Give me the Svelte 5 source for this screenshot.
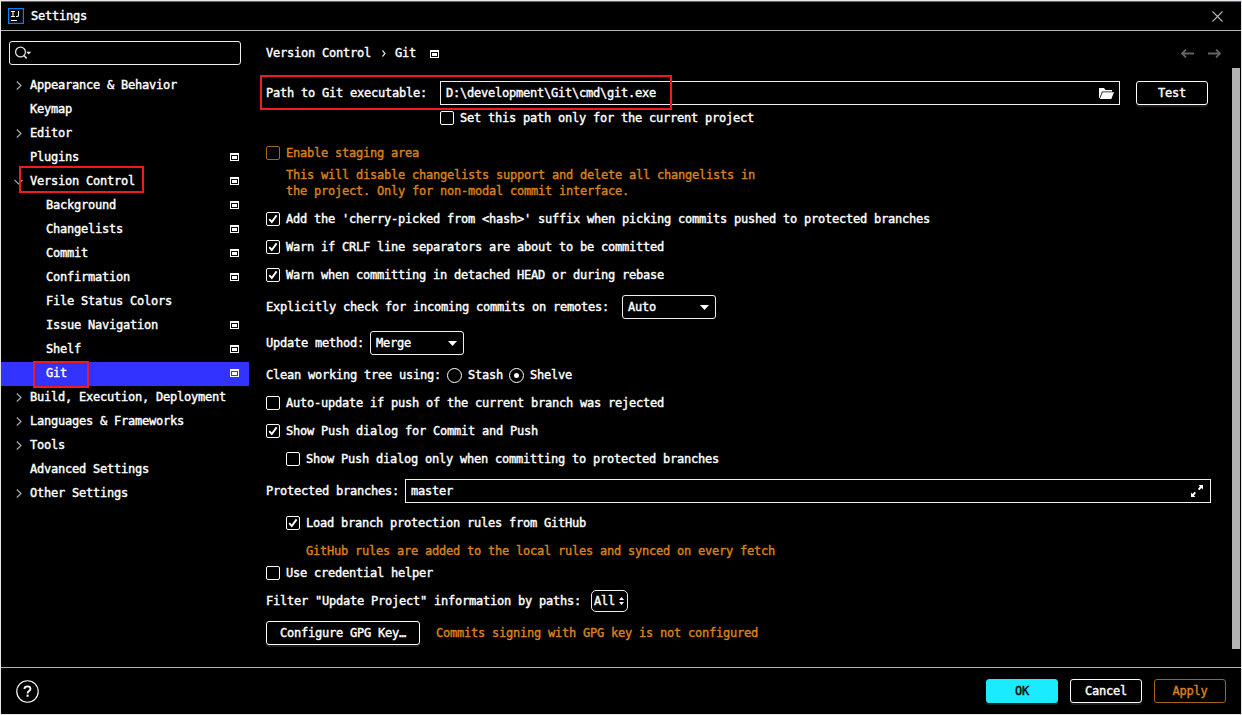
<script>
  const tree = [
    { label: 'Appearance & Behavior', arrow: 'right' },
    { label: 'Keymap' },
    { label: 'Editor', arrow: 'right' },
    { label: 'Plugins', badge: true },
    { label: 'Version Control', arrow: 'down', badge: true },
    { label: 'Background', child: true, badge: true },
    { label: 'Changelists', child: true, badge: true },
    { label: 'Commit', child: true, badge: true },
    { label: 'Confirmation', child: true, badge: true },
    { label: 'File Status Colors', child: true },
    { label: 'Issue Navigation', child: true, badge: true },
    { label: 'Shelf', child: true, badge: true },
    { label: 'Git', child: true, badge: true, selected: true },
    { label: 'Build, Execution, Deployment', arrow: 'right' },
    { label: 'Languages & Frameworks', arrow: 'right' },
    { label: 'Tools', arrow: 'right' },
    { label: 'Advanced Settings' },
    { label: 'Other Settings', arrow: 'right' }
  ];
</script>

{#snippet badge()}
  <svg class="badge" width="9" height="8" viewBox="0 0 9 8" shape-rendering="crispEdges">
    <path fill="#fff" fill-rule="evenodd" d="M0 0h9v8H0zM1 2v5h7V2z" />
    <path fill="#fff" d="M2 3h5v3H2z" />
  </svg>
{/snippet}

{#snippet check(label, checked, cls = '')}
  <div class="check {cls}">
    <svg width="14" height="14" viewBox="0 0 14 14">
      <rect x=".5" y=".5" width="13" height="13" rx="1.5" fill="none" stroke="currentColor" />
      {#if checked}<path d="M3.2 7.2 5.8 10 10.6 3.4" fill="none" stroke="currentColor" stroke-width="1.9" />{/if}
    </svg>
    <span class="t">{label}</span>
  </div>
{/snippet}

{#snippet combo(value)}
  <div class="combo">
    <span class="t">{value}</span>
    <svg width="9" height="5" viewBox="0 0 9 5"><path d="M0 0h9L4.500 5z" fill="#fff" /></svg>
  </div>
{/snippet}

<div class="window">
  <header>
    <svg width="16" height="16" viewBox="0 0 16 16">
      <rect x=".6" y=".6" width="14.800" height="14.800" fill="#000" stroke="#087cfa" stroke-width="1.200" />
      <path d="M3 3.500h4M5 3.500v5M3 8.500h4M10.500 3v4.200q0 1.300-1.300 1.300H8" fill="none" stroke="#fff" stroke-width="1.100" />
      <path d="M3 12h6v1H3z" fill="#fff" />
    </svg>
    <span class="t">Settings</span>
    <svg class="close" width="11" height="11" viewBox="0 0 11 11"><path d="M.5.5l10 10M10.500.5l-10 10" stroke="#b4b4b4" stroke-width="1.1" /></svg>
  </header>

  <div class="body">
    <aside>
      <div class="search">
        <svg width="18" height="14" viewBox="0 0 18 14">
          <circle cx="5.500" cy="6" r="4.900" fill="none" stroke="#ddd" stroke-width="1.300" />
          <path d="M8.900 9.500l2.800 2.900" stroke="#ddd" stroke-width="1.600" />
          <path d="M11.200 5.800h5L13.700 8.500z" fill="#eee" />
        </svg>
      </div>
      <nav>
        {#each tree as item}
          <div class="node" class:child={item.child} class:selected={item.selected}>
            <span class="arrow">
              {#if item.arrow === 'right'}
                <svg width="6" height="9" viewBox="0 0 6 9"><path d="M.8.5l4.200 4-4.200 4" fill="none" stroke="#aaa" stroke-width="1.200" /></svg>
              {:else if item.arrow === 'down'}
                <svg width="9" height="6" viewBox="0 0 9 6"><path d="M.5.8l4 4.200 4-4.200" fill="none" stroke="#aaa" stroke-width="1.200" /></svg>
              {/if}
            </span>
            <span class="t">{item.label}</span>
            {#if item.badge}{@render badge()}{/if}
          </div>
        {/each}
      </nav>
    </aside>

    <main>
      <div class="crumbs">
        <span class="t">Version Control</span>
        <svg class="sep" width="4" height="7" viewBox="0 0 4 7"><path d="M.5.500l2.500 3-2.500 3" fill="none" stroke="#ddd" stroke-width="1.200" /></svg>
        <span class="t">Git</span>
        {@render badge()}
        <svg class="nav" width="40" height="9" viewBox="0 0 40 9">
          <path d="M13 4.500H1.200M5 .5l-4 4 4 4M27 4.500h11.800M35 .5l4 4-4 4" fill="none" stroke="#626262" stroke-width="1.800" />
        </svg>
      </div>

      <div class="row path">
        <span class="t label">Path to Git executable:</span>
        <div class="field">
          <span class="t">D:\development\Git\cmd\git.exe</span>
          <svg width="15" height="11" viewBox="0 0 15 11"><path d="M0 0h5l1.500 2H13v1.500H3L.6 10H0zM3.600 4.300H15L12.300 11H.9z" fill="#fff" /></svg>
        </div>
        <div class="btn test"><span class="t">Test</span></div>
      </div>
      {@render check('Set this path only for the current project', false, 'onlyproj')}
      {@render check('Enable staging area', false, 'staging orange')}
      <p class="orange hint">This will disable changelists support and delete all changelists in<br />the project. Only for non-modal commit interface.</p>
      {@render check("Add the 'cherry-picked from <hash>' suffix when picking commits pushed to protected branches", true)}
      {@render check('Warn if CRLF line separators are about to be committed', true)}
      {@render check('Warn when committing in detached HEAD or during rebase', true)}
      <div class="row incoming"><span class="t">Explicitly check for incoming commits on remotes:</span>{@render combo('Auto')}</div>
      <div class="row update"><span class="t">Update method:</span>{@render combo('Merge')}</div>
      <div class="row radios">
        <span class="t">Clean working tree using:</span>
        <svg width="15" height="15" viewBox="0 0 15 15"><circle cx="7.500" cy="7.500" r="7" fill="none" stroke="#fff" /></svg>
        <span class="t">Stash</span>
        <svg width="15" height="15" viewBox="0 0 15 15"><circle cx="7.500" cy="7.500" r="7" fill="none" stroke="#fff" /><circle cx="7.500" cy="7.500" r="2.500" fill="#fff" /></svg>
        <span class="t">Shelve</span>
      </div>
      {@render check('Auto-update if push of the current branch was rejected', false)}
      {@render check('Show Push dialog for Commit and Push', true)}
      {@render check('Show Push dialog only when committing to protected branches', false, 'indent')}
      <div class="row protected">
        <span class="t">Protected branches:</span>
        <div class="field">
          <span class="t">master</span>
          <svg width="12" height="12" viewBox="0 0 12 12"><path d="M7.500 0H12v4.500l-1.500-1.400L8.300 5.200 6.900 3.900 9 1.600zM0 7.500l1.500 1.400 2.100-2.100 1.400 1.300-2.100 2.300L4.500 12H0z" fill="#fff" /></svg>
        </div>
      </div>
      {@render check('Load branch protection rules from GitHub', true, 'indent load')}
      <div class="orange rules"><span class="t">GitHub rules are added to the local rules and synced on every fetch</span></div>
      {@render check('Use credential helper', false, 'cred')}
      <div class="row filter">
        <span class="t">Filter "Update Project" information by paths:</span>
        <div class="all">
          <span class="t">All</span>
          <svg width="5" height="8" viewBox="0 0 5 8"><path d="M0 3h5L2.500 0zM0 5h5L2.500 8z" fill="#fff" /></svg>
        </div>
      </div>
      <div class="row gpg">
        <div class="btn"><span class="t">Configure GPG Key…</span></div>
        <span class="t orange">Commits signing with GPG key is not configured</span>
      </div>
      <div class="scroll"></div>
    </main>
  </div>

  <footer>
    <svg width="23" height="23" viewBox="0 0 24 24"><circle cx="12" cy="12" r="11.200" fill="none" stroke="#fff" stroke-width="1.200" /><path d="M8.700 9.300Q8.900 6.600 12 6.600q3.100 0 3.100 2.600 0 1.400-1.500 2.300-1.500.9-1.500 2.500" fill="none" stroke="#fff" stroke-width="1.900" /><path d="M11 15.300h2.200v2.200H11z" fill="#fff" /></svg>
    <div class="btn ok"><span class="t">OK</span></div>
    <div class="btn"><span class="t">Cancel</span></div>
    <div class="btn apply"><span class="t">Apply</span></div>
  </footer>

  <div class="mark mark-vc"></div>
  <div class="mark mark-git"></div>
  <div class="mark mark-path"></div>
</div>

<style>
  :global(body) { margin: 0; background: #000; }
  .window {
    position: relative; box-sizing: border-box; width: 1242px; height: 715px;
    display: flex; flex-direction: column; overflow: hidden;
    background: #000; color: #fff; border: 1px solid #e6e6e6;
    font: 12px/16px "DejaVu Sans Mono", monospace; letter-spacing: -0.2246px;
    -webkit-text-stroke: 0.4px currentColor; white-space: nowrap;
  }
  svg { display: block; flex: none; }
  header {
    box-sizing: border-box; height: 30px; flex: none; display: flex; align-items: center;
    padding: 0 18px 0 7px; border-top: 1px solid #6b5a96; border-bottom: 1px solid #b4b4b4;
  }
  header .t { margin-left: 7px; }
  .close { margin-left: auto; }
  .body { height: 636px; flex: none; display: flex; }
  aside { width: 248px; flex: none; display: flex; flex-direction: column; }
  .search {
    box-sizing: border-box; width: 232px; height: 24px; margin: 10px 0 0 8px;
    border: 1px solid #eee; border-radius: 3px; display: flex; align-items: center; padding-left: 5px;
  }
  nav { margin-top: 9px; display: flex; flex-direction: column; }
  .node { box-sizing: border-box; height: 24px; display: flex; align-items: center; padding-right: 10px; }
  .node .t { position: relative; top: -1px; }
  .node .badge { margin: -2px 0 0 auto; }
  .arrow { width: 29px; height: 100%; flex: none; display: flex; align-items: center; justify-content: center; box-sizing: border-box; padding: 0 8px 1px 14px; }
  .child .arrow { width: 45px; }
  .selected { background: #3333ff; }
  main { position: relative; flex: 1; padding: 10px 0 0 17px; display: flex; flex-direction: column; }
  .crumbs { height: 24px; flex: none; display: flex; align-items: center; padding-right: 20px; }
  .sep { margin: 1px 9px 0 11px; }
  .crumbs .badge { margin: 2px 0 0 14px; }
  .nav { margin-left: auto; }
  .row { height: 24px; flex: none; display: flex; align-items: center; }
  .path { margin-top: 16px; }
  .path .label { width: 174px; }
  .field {
    box-sizing: border-box; height: 24px; border: 1px solid #eee;
    display: flex; align-items: center; justify-content: space-between; padding: 0 7px 0 5px;
  }
  .path .field { width: 680px; padding-right: 5px; }
  .btn {
    box-sizing: border-box; width: 72px; height: 24px; border: 1px solid #fff; border-radius: 3px;
    display: flex; align-items: center; justify-content: center; box-shadow: 0 2px 0 #1c1c1c;
  }
  .test { margin-left: 16px; }
  .check { height: 28px; flex: none; display: flex; align-items: center; gap: 6px; }
  .onlyproj { height: 26px; margin-left: 174px; }
  .staging { height: 20px; margin-top: 12px; }
  .staging svg { color: #a8631a; }
  .orange { color: #d9811e; }
  .hint { margin: 4px 0 6px 20px; }
  .incoming { margin-top: 6px; gap: 13px; }
  .combo {
    box-sizing: border-box; width: 94px; height: 24px; border: 1px solid #eee; border-radius: 3px;
    display: flex; align-items: center; justify-content: space-between; padding: 0 6px 0 5px;
  }
  .update { margin-top: 12px; gap: 6px; }
  .radios { height: 28px; margin-top: 6px; gap: 6px; }
  .indent { margin-left: 20px; }
  .protected { margin-top: 6px; gap: 6px; }
  .protected .field { width: 806px; }
  .load { margin-top: 6px; }
  .rules { box-sizing: border-box; height: 26px; flex: none; display: flex; align-items: center; margin-left: 40px; padding-top: 2px; }
  .cred { height: 20px; }
  .filter { height: 28px; margin-top: 4px; gap: 10px; }
  .all {
    box-sizing: border-box; width: 37px; height: 22px; border: 1px solid #eee; border-radius: 5px;
    display: flex; align-items: center; justify-content: space-between; padding: 0 3px 0 2px;
  }
  .gpg { margin-top: 6px; gap: 16px; }
  .gpg .btn { width: 154px; }
  .scroll { position: absolute; right: 1px; top: 37px; width: 8px; height: 581px; background: #b3b3b3; }
  footer {
    box-sizing: border-box; flex: 1; display: flex; align-items: center; gap: 12px;
    padding: 0 15px 0 15px; border-top: 1px solid #b4b4b4;
  }
  footer svg { margin-right: auto; margin-top: 1px; }
  .ok { background: #1aebff; border-color: #1aebff; color: #000; }
  .apply { color: #d9811e; border-color: #a8631a; box-shadow: none; }
  .mark { position: absolute; box-sizing: border-box; border: 2px solid #ed1c24; }
  .mark-vc { left: 18px; top: 165px; width: 125px; height: 27px; }
  .mark-git { left: 32px; top: 360px; width: 56px; height: 27px; }
  .mark-path { left: 259px; top: 74px; width: 412px; height: 35px; }
</style>
